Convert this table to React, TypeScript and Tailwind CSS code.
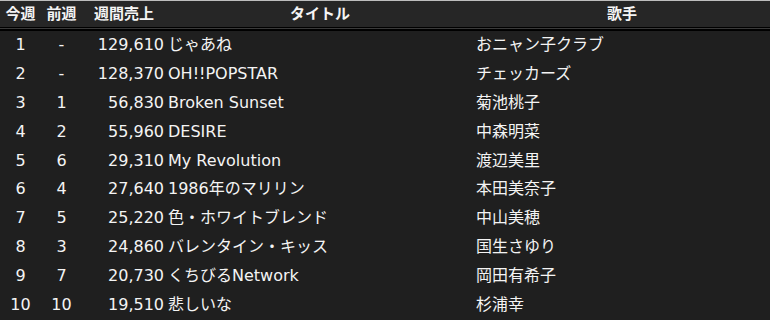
const rows = [
  { now: "1", prev: "-", sales: "129,610", title: "じゃあね", artist: "おニャン子クラブ" },
  { now: "2", prev: "-", sales: "128,370", title: "OH!!POPSTAR", artist: "チェッカーズ" },
  { now: "3", prev: "1", sales: "56,830", title: "Broken Sunset", artist: "菊池桃子" },
  { now: "4", prev: "2", sales: "55,960", title: "DESIRE", artist: "中森明菜" },
  { now: "5", prev: "6", sales: "29,310", title: "My Revolution", artist: "渡辺美里" },
  { now: "6", prev: "4", sales: "27,640", title: "1986年のマリリン", artist: "本田美奈子" },
  { now: "7", prev: "5", sales: "25,220", title: "色・ホワイトブレンド", artist: "中山美穂" },
  { now: "8", prev: "3", sales: "24,860", title: "バレンタイン・キッス", artist: "国生さゆり" },
  { now: "9", prev: "7", sales: "20,730", title: "くちびるNetwork", artist: "岡田有希子" },
  { now: "10", prev: "10", sales: "19,510", title: "悲しいな", artist: "杉浦幸" },
];

const App = () => {
  return (
    <div
      className="w-[770px] h-[320px] overflow-hidden bg-[#1f1f1f] text-[#f4f4f4] text-[16px]"
      style={{ fontFamily: '"DejaVu Sans", "Noto Sans CJK JP", sans-serif' }}
    >
      <div className="h-[27px] bg-[#262626] border-t border-[#bdbdbd] flex items-center font-semibold text-[15px]">
        <div className="w-[41px] text-center">今週</div>
        <div className="w-[41px] text-center">前週</div>
        <div className="w-[84px] text-center">週間売上</div>
        <div className="w-[308px] text-center">タイトル</div>
        <div className="flex-1 text-center">歌手</div>
      </div>
      <div className="h-[4px] border-y-2 border-black bg-[#3a3a3a] [border-top-width:1px]" />
      {rows.map((r) => (
        <div key={r.now} className="h-[28.8px] flex items-center">
          <div className="w-[41px] text-center">{r.now}</div>
          <div className="w-[41px] text-center">{r.prev}</div>
          <div className="w-[82px] text-right">{r.sales}</div>
          <div className="w-[310px] pl-[4px] whitespace-nowrap">{r.title}</div>
          <div className="flex-1 pl-[2px] whitespace-nowrap">{r.artist}</div>
        </div>
      ))}
    </div>
  );
};

export default App;
